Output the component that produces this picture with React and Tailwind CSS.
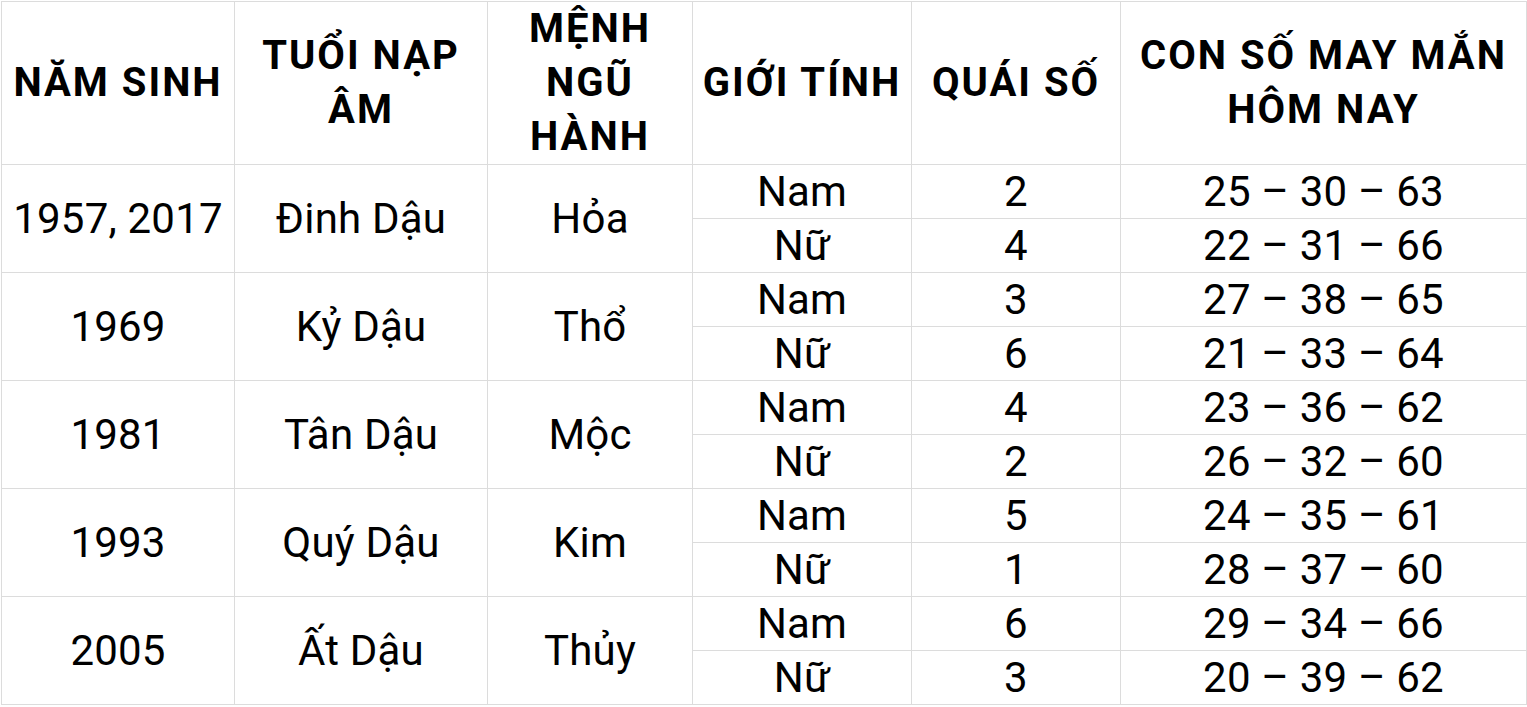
import React from 'react';

const groups = [
  {
    year: '1957, 2017',
    tuoi: 'Đinh Dậu',
    menh: 'Hỏa',
    rows: [
      ['Nam', '2', '25 – 30 – 63'],
      ['Nữ', '4', '22 – 31 – 66'],
    ],
  },
  {
    year: '1969',
    tuoi: 'Kỷ Dậu',
    menh: 'Thổ',
    rows: [
      ['Nam', '3', '27 – 38 – 65'],
      ['Nữ', '6', '21 – 33 – 64'],
    ],
  },
  {
    year: '1981',
    tuoi: 'Tân Dậu',
    menh: 'Mộc',
    rows: [
      ['Nam', '4', '23 – 36 – 62'],
      ['Nữ', '2', '26 – 32 – 60'],
    ],
  },
  {
    year: '1993',
    tuoi: 'Quý Dậu',
    menh: 'Kim',
    rows: [
      ['Nam', '5', '24 – 35 – 61'],
      ['Nữ', '1', '28 – 37 – 60'],
    ],
  },
  {
    year: '2005',
    tuoi: 'Ất Dậu',
    menh: 'Thủy',
    rows: [
      ['Nam', '6', '29 – 34 – 66'],
      ['Nữ', '3', '20 – 39 – 62'],
    ],
  },
];

const Head = ({ children }) => (
  <div className="bg-white flex items-center justify-center text-center font-bold text-[40px] leading-[54px] tracking-[2px] whitespace-nowrap">
    {children}
  </div>
);

const Cell = ({ children, span }) => (
  <div
    className={`bg-white flex items-center justify-center text-center text-[42px] leading-none whitespace-nowrap tracking-[0.2px] ${
      span ? 'row-span-2' : ''
    }`}
  >
    {children}
  </div>
);

export default function App() {
  return (
    <div className="bg-white w-[1527px] h-[707px] pl-px pt-px text-black" style={{ fontFamily: 'Roboto, "Noto Sans", sans-serif' }}>
      <div className="grid w-[1526px] grid-cols-[232px_252px_204px_218px_208px_405px] grid-rows-[162px_repeat(10,53px)] gap-px p-px bg-[#dcdcdc]">
        <Head>NĂM SINH</Head>
        <Head>
          TUỔI NẠP
          <br />
          ÂM
        </Head>
        <Head>
          MỆNH
          <br />
          NGŨ
          <br />
          HÀNH
        </Head>
        <Head>GIỚI TÍNH</Head>
        <Head>QUÁI SỐ</Head>
        <Head>
          CON SỐ MAY MẮN
          <br />
          HÔM NAY
        </Head>

        {groups.map((g) => (
          <React.Fragment key={g.year}>
            <Cell span>{g.year}</Cell>
            <Cell span>{g.tuoi}</Cell>
            <Cell span>{g.menh}</Cell>
            {g.rows.map(([gt, qs, nums]) => (
              <React.Fragment key={gt}>
                <Cell>{gt}</Cell>
                <Cell>{qs}</Cell>
                <Cell>{nums}</Cell>
              </React.Fragment>
            ))}
          </React.Fragment>
        ))}
      </div>
    </div>
  );
}
